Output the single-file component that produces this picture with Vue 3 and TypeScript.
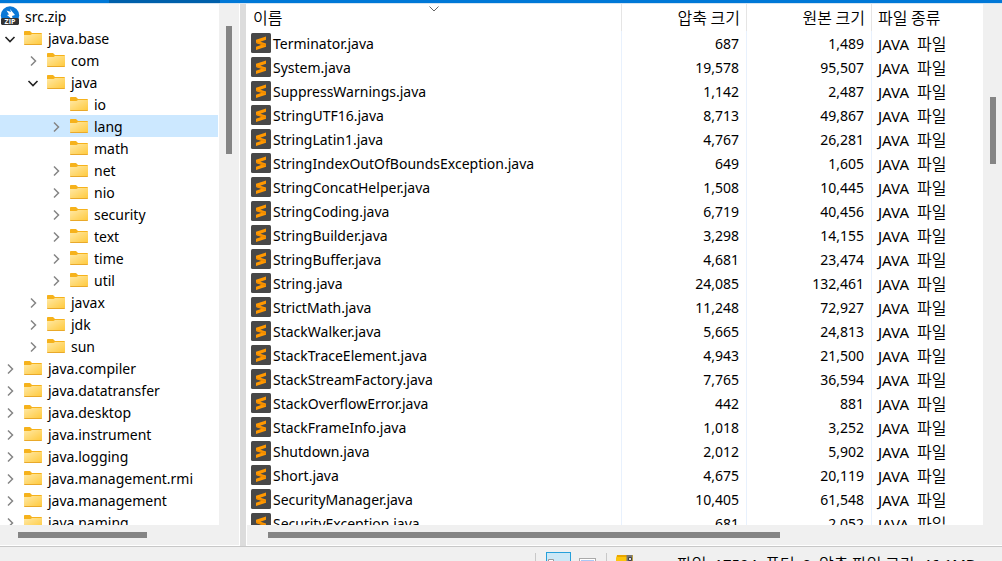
<script setup lang="ts">
interface TreeNode {
  name: string
  level: number
  state: 'open' | 'closed' | 'leaf'
  selected?: boolean
}

const tree: TreeNode[] = [
  { name: 'java.base', level: 1, state: 'open' },
  { name: 'com', level: 2, state: 'closed' },
  { name: 'java', level: 2, state: 'open' },
  { name: 'io', level: 3, state: 'leaf' },
  { name: 'lang', level: 3, state: 'closed', selected: true },
  { name: 'math', level: 3, state: 'leaf' },
  { name: 'net', level: 3, state: 'closed' },
  { name: 'nio', level: 3, state: 'closed' },
  { name: 'security', level: 3, state: 'closed' },
  { name: 'text', level: 3, state: 'closed' },
  { name: 'time', level: 3, state: 'closed' },
  { name: 'util', level: 3, state: 'closed' },
  { name: 'javax', level: 2, state: 'closed' },
  { name: 'jdk', level: 2, state: 'closed' },
  { name: 'sun', level: 2, state: 'closed' },
  { name: 'java.compiler', level: 1, state: 'closed' },
  { name: 'java.datatransfer', level: 1, state: 'closed' },
  { name: 'java.desktop', level: 1, state: 'closed' },
  { name: 'java.instrument', level: 1, state: 'closed' },
  { name: 'java.logging', level: 1, state: 'closed' },
  { name: 'java.management.rmi', level: 1, state: 'closed' },
  { name: 'java.management', level: 1, state: 'closed' },
  { name: 'java.naming', level: 1, state: 'closed' },
]

const files: [string, string, string][] = [
  ['Terminator.java', '687', '1,489'],
  ['System.java', '19,578', '95,507'],
  ['SuppressWarnings.java', '1,142', '2,487'],
  ['StringUTF16.java', '8,713', '49,867'],
  ['StringLatin1.java', '4,767', '26,281'],
  ['StringIndexOutOfBoundsException.java', '649', '1,605'],
  ['StringConcatHelper.java', '1,508', '10,445'],
  ['StringCoding.java', '6,719', '40,456'],
  ['StringBuilder.java', '3,298', '14,155'],
  ['StringBuffer.java', '4,681', '23,474'],
  ['String.java', '24,085', '132,461'],
  ['StrictMath.java', '11,248', '72,927'],
  ['StackWalker.java', '5,665', '24,813'],
  ['StackTraceElement.java', '4,943', '21,500'],
  ['StackStreamFactory.java', '7,765', '36,594'],
  ['StackOverflowError.java', '442', '881'],
  ['StackFrameInfo.java', '1,018', '3,252'],
  ['Shutdown.java', '2,012', '5,902'],
  ['Short.java', '4,675', '20,119'],
  ['SecurityManager.java', '10,405', '61,548'],
  ['SecurityException.java', '681', '2,052'],
]
</script>

<template>
  <div class="window">
    <div class="titlebar"><span class="title-tab"></span></div>
    <main class="panes">
      <nav class="pane" aria-label="src.zip">
        <ul class="tree view">
          <li class="node root">
            <svg class="zip-icon" width="20" height="20" viewBox="0 0 20 20" aria-hidden="true">
              <circle cx="10" cy="9.5" r="9.2" fill="#0b78d6" />
              <path d="M6.5 4.5 11 6l-1-3 5 6-3 1 1 4-6-5 2-.5z" fill="#fff" />
              <path d="M2 12h16l1 1v5l-1 1H2l-1-1v-5z" fill="#333" />
              <text x="10" y="18" class="zip-label">ZIP</text>
            </svg>
            <span class="label">src.zip</span>
          </li>
          <li
            v-for="node in tree"
            :key="node.name"
            class="node"
            :class="['level-' + node.level, { selected: node.selected }]"
          >
            <button v-if="node.state !== 'leaf'" class="toggle" :aria-label="node.name" :aria-expanded="node.state === 'open'">
              <svg v-if="node.state === 'open'" width="12" height="12" viewBox="0 0 12 12">
                <path d="M1.5 4 6 8.5 10.5 4" fill="none" stroke="#222" stroke-width="1.6" />
              </svg>
              <svg v-else width="12" height="12" viewBox="0 0 12 12">
                <path d="M4 1.5 8.5 6 4 10.5" fill="none" stroke="#858585" stroke-width="1.5" />
              </svg>
            </button>
            <span v-else class="toggle"></span>
            <svg class="folder" width="18" height="16" viewBox="0 0 18 16" aria-hidden="true">
              <defs>
                <linearGradient id="folder-face" x1="0" y1="0" x2="1" y2="1">
                  <stop offset="0" stop-color="#ffe9a6" />
                  <stop offset="1" stop-color="#ffc93c" />
                </linearGradient>
              </defs>
              <path d="M0 1.5Q0 1 1 1h5l2 2h9q1 0 1 1v4H0z" fill="#f6b21b" />
              <path d="M0 5h6.500L8 4h10v10.500H0z" fill="url(#folder-face)" />
              <path d="M0 14h18q0 1-1 1H1q-1 0-1-1z" fill="#e9a92a" />
            </svg>
            <span class="label">{{ node.name }}</span>
          </li>
        </ul>
        <div class="vbar"><span class="thumb tree-v"></span></div>
        <div class="hbar"><span class="thumb tree-h"></span></div>
      </nav>
      <div class="splitter"></div>
      <section class="pane list" aria-label="java/lang">
        <div class="view">
          <table class="files">
            <colgroup>
              <col />
              <col class="size" />
              <col class="size" />
              <col class="kind" />
            </colgroup>
            <thead>
              <tr>
                <th>
                  <button class="ko">이름</button>
                  <svg class="sort" width="12" height="6" viewBox="0 0 12 6" aria-hidden="true">
                    <path d="M1.500.5 6 5 10.500.5" fill="none" stroke="#666" />
                  </svg>
                </th>
                <th class="num"><button class="ko">압축 크기</button></th>
                <th class="num"><button class="ko">원본 크기</button></th>
                <th><button class="ko">파일 종류</button></th>
              </tr>
            </thead>
            <tbody>
              <tr v-for="[name, packed, original] in files" :key="name">
                <td>
                  <div class="file">
                    <svg width="20" height="20" viewBox="0 0 20 20" aria-hidden="true">
                      <rect width="20" height="20" rx="1.500" fill="#484848" />
                      <path
                        d="M15 3.500v3.300L9.300 8.700 15 10.500v3.300L5 17v-3.300l5.700-1.900L5 10V6.700z"
                        fill="#ff9800"
                      />
                      <path d="M5 8.500 15 11.500v2L5 10z" fill="#f08c00" />
                    </svg>
                    <span class="label">{{ name }}</span>
                  </div>
                </td>
                <td class="num">{{ packed }}</td>
                <td class="num">{{ original }}</td>
                <td class="type">JAVA <span class="ko">파일</span></td>
              </tr>
            </tbody>
          </table>
        </div>
        <div class="vbar"><span class="thumb files-v"></span></div>
        <div class="hbar"><span class="thumb files-h"></span></div>
      </section>
    </main>
    <footer class="status">
      <span class="rule"></span>
      <button class="mode active" aria-label="자세히">
        <svg width="21" height="16" viewBox="0 0 21 16">
          <path d="M.5 4.500h5v5h-5zM2.500 6v2M.5 11.500h5v4h-5z" fill="#fff" stroke="#999" />
          <path d="M8 6.500h5m2 0h5M8 12.500h5m2 0h5" stroke="#888" />
        </svg>
      </button>
      <button class="mode" aria-label="아이콘">
        <svg width="17" height="16" viewBox="0 0 17 16">
          <rect x=".5" y=".5" width="16" height="13" fill="#fff" stroke="#aaa" />
          <rect x="2" y="2" width="13" height="10" fill="#a9c8f5" />
        </svg>
      </button>
      <span class="rule"></span>
      <svg class="archive" width="18" height="18" viewBox="0 0 18 18" aria-hidden="true">
        <path d="M1 0h16v18H0V3z" fill="#fcc50c" />
        <path d="M1 0h10v2H1z" fill="#e9a500" />
        <path d="M10.500 0h6v18h-6z" fill="#777" />
        <path d="M12.500 2.500h3v3h-3z" fill="#ddd" stroke="#444" />
      </svg>
      <span class="summary">
        <span class="ko">파일</span>: 17594, <span class="ko">폴더</span>: 0,
        <span class="ko">압축 파일 크기</span>: 46.1MB
      </span>
    </footer>
  </div>
</template>

<style>
body {
  margin: 0;
}
</style>

<style scoped>
.window {
  display: flex;
  flex-direction: column;
  height: 100vh;
  overflow: hidden;
  background: #f0f0f0;
  color: #000;
  font: 14px/22px "Noto Sans", "Noto Sans CJK KR", sans-serif;
}
button {
  padding: 0;
  border: 0;
  background: none;
  color: inherit;
  font: inherit;
}
svg {
  display: block;
  flex: none;
}
.ko {
  font-family: "Noto Sans CJK KR", sans-serif;
  font-size: 16px;
  font-weight: 350;
  line-height: 16px;
}
.label {
  padding-top: 2px;
}
.titlebar {
  flex: none;
  height: 3px;
  padding-left: 109px;
  background: #0078d7;
  border-bottom: 1px solid #d5e5f2;
}
.title-tab {
  display: block;
  width: 111px;
  height: 3px;
  background: #0060ab;
}
.panes {
  display: grid;
  grid-template-columns: 240px 6px minmax(0, 1fr);
  flex: 1;
  min-height: 0;
  border-bottom: 1px solid #c8c8c8;
}
.pane {
  display: grid;
  grid-template-columns: minmax(0, 1fr) 20px;
  grid-template-rows: minmax(0, 1fr) 20px;
  min-height: 0;
  border-right: 1px solid #fff;
  border-bottom: 1px solid #fff;
}
.list {
  grid-template-columns: minmax(0, 1fr) 19px;
  border-right: 0;
  border-left: 1px solid #fff;
}
.splitter {
  background: #dcdcdc;
}
.view {
  overflow: hidden;
  background: #fff;
}
.tree {
  margin: 0;
  padding: 1px 1px 0 0;
  list-style: none;
}
.node {
  display: flex;
  align-items: center;
  height: 22px;
  white-space: nowrap;
}
.root {
  gap: 5px;
}
.zip-label {
  fill: #fff;
  font: bold 7px "Open Sans", sans-serif;
  text-anchor: middle;
}
.level-1 {
  padding-left: 4px;
}
.level-2 {
  padding-left: 27px;
}
.level-3 {
  padding-left: 50px;
}
.selected {
  background: #cce8ff;
}
.toggle {
  width: 12px;
  margin-right: 8px;
  padding-top: 2px;
}
.folder {
  margin-right: 6px;
}
.hbar {
  grid-column: 1 / 3;
}
.thumb {
  display: block;
  background: #858585;
}
.vbar .thumb {
  width: 6px;
  margin-left: 7px;
}
.hbar .thumb {
  height: 6px;
  margin-top: 7px;
}
.tree-v {
  height: 128px;
  margin-top: 22px;
}
.tree-h {
  width: 129px;
  margin-left: 18px;
}
.files-v {
  height: 67px;
  margin-top: 93px;
}
.files-h {
  width: 512px;
  margin-left: 21px;
}
.files {
  width: 100%;
  table-layout: fixed;
  border-collapse: separate;
  border-spacing: 0;
}
.size {
  width: 125px;
}
.kind {
  width: 112px;
}
th,
td {
  padding: 0 6px;
  text-align: left;
  font-weight: 400;
  white-space: nowrap;
}
th {
  position: relative;
  height: 25px;
  padding-top: 2px;
}
td {
  height: 22px;
  padding-top: 2px;
}
th + th {
  border-left: 1px solid #e5e5e5;
}
td + td {
  border-left: 1px solid #e8f1fd;
}
.num {
  text-align: right;
}
td.num {
  padding-right: 7px;
}
.type {
  font-size: 15px;
}
.type .ko {
  margin-left: 4px;
}
.sort {
  position: absolute;
  top: 2px;
  left: calc(50% - 6px);
}
td:first-child {
  padding-top: 0;
  padding-left: 4px;
}
.file {
  display: flex;
  align-items: center;
  gap: 2px;
  height: 24px;
}
.status {
  display: flex;
  align-items: flex-start;
  flex: none;
  height: 14px;
  padding-left: 535px;
  overflow: hidden;
}
.rule {
  width: 1px;
  height: 20px;
  margin-top: 6px;
  background: #c8c8c8;
}
.mode {
  width: 25px;
  height: 22px;
  margin: 5px 2px 0 8px;
  padding: 5px 0 0;
}
.mode.active {
  margin: 5px 0 0 10px;
  padding: 0 1px;
  background: #cce8f6;
  border: 1px solid #26a0da;
}
.archive {
  margin: 8px 43px 0 9px;
}
.summary {
  margin-top: 6px;
  font-size: 15px;
  white-space: nowrap;
}
</style>
